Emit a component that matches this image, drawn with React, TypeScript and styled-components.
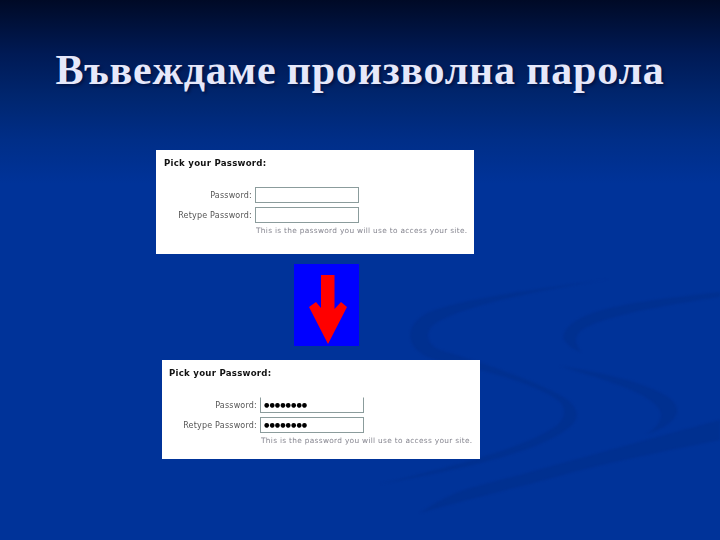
import React from "react";
import styled, { createGlobalStyle } from "styled-components";

const Global = createGlobalStyle`
  html, body { margin: 0; padding: 0; background: #003399; }
`;

const Slide = styled.main`
  position: relative;
  width: 720px;
  height: 540px;
  overflow: hidden;
  background: linear-gradient(180deg, #000a26 0%, #001a55 10%, #00266f 18%, #002e88 26%, #003399 34%, #003399 100%);
  display: flex;
  flex-direction: column;
`;

const Swooshes = styled.svg`
  position: absolute;
  inset: 0;
  width: 720px;
  height: 540px;
  filter: blur(1.2px);
`;

const Title = styled.h1`
  position: relative;
  margin: 0;
  height: 150px;
  box-sizing: border-box;
  padding-top: 45px;
  text-align: center;
  font-family: "Liberation Serif", "Times New Roman", serif;
  font-size: 42px;
  line-height: 50px;
  font-weight: 700;
  letter-spacing: 0.8px;
  word-spacing: -1px;
  color: #e6e8fa;
  text-shadow: 2px 2px 3px rgba(0, 0, 30, 0.45);
  white-space: nowrap;
`;

const Card = styled.section<{ $left: number; $height: number; $top: number; $inset: number }>`
  position: relative;
  width: 318px;
  height: ${(p) => p.$height}px;
  margin-left: ${(p) => p.$left}px;
  margin-top: ${(p) => p.$top}px;
  box-sizing: border-box;
  padding: 7px 8px 0 ${(p) => p.$inset}px;
  background: #fff;
  font-family: "DejaVu Sans", Verdana, sans-serif;
  filter: blur(0.3px);
`;

const CardTitle = styled.h2`
  margin: 0 0 17px;
  font-size: 8.6px;
  line-height: 13px;
  font-weight: 700;
  letter-spacing: 0.25px;
  color: #111;
`;

const Form = styled.div`
  display: grid;
  grid-template-columns: 88px 104px;
  column-gap: 3px;
  row-gap: 4px;
  align-items: center;
`;

const Label = styled.label`
  text-align: right;
  font-size: 8px;
  letter-spacing: 0.2px;
  color: #555;
  white-space: nowrap;
`;

const Field = styled.div<{ $openTop?: boolean }>`
  box-sizing: border-box;
  height: 16px;
  padding: 0 0 0 3px;
  border: 1px solid #8b9c9c;
  border-top-color: ${(p) => (p.$openTop ? "#fff" : "#8b9c9c")};
  display: flex;
  align-items: center;
`;

const Dots = styled.span`
  font-family: "DejaVu Sans", sans-serif;
  font-size: 6.2px;
  line-height: 1;
  letter-spacing: 0px;
  color: #000;
`;

const Hint = styled.p`
  margin: 3px 0 0 92px;
  font-size: 7.4px;
  line-height: 10px;
  letter-spacing: 0.3px;
  font-weight: 400;
  color: #85858f;
  white-space: nowrap;
`;

const ArrowBox = styled.div`
  position: relative;
  width: 65px;
  height: 82px;
  margin: 10px 0 0 294px;
  background: #0000ff;
`;

const ArrowIcon = styled.svg`
  display: block;
  width: 65px;
  height: 82px;
`;

const PasswordCard = ({
  left,
  top,
  height,
  inset,
  filled,
}: {
  left: number;
  top: number;
  height: number;
  inset: number;
  filled?: boolean;
}) => (
  <Card $left={left} $top={top} $height={height} $inset={inset}>
    <CardTitle>Pick your Password:</CardTitle>
    <Form>
      <Label>Password:</Label>
      <Field $openTop={filled}>{filled && <Dots>●●●●●●●●</Dots>}</Field>
      <Label>Retype Password:</Label>
      <Field>{filled && <Dots>●●●●●●●●</Dots>}</Field>
    </Form>
    <Hint>This is the password you will use to access your site.</Hint>
  </Card>
);

export default function App() {
  return (
    <Slide>
      <Global />
      <Swooshes viewBox="0 0 720 540" aria-hidden="true">
        <g fill="#003090">
          <path d="M610 279 C540 289 470 297 432 311 C414 318 408 330 411 341 C415 352 428 359 445 362 C478 368 540 385 560 402 C566 408 566 418 556 426 C530 445 470 462 380 484 C470 468 545 450 572 425 C580 417 578 407 565 398 C535 380 480 362 440 350 C427 344 425 334 432 326 C455 307 540 290 610 279 Z" />
          <path d="M720 292 C670 298 615 303 585 316 C567 324 560 335 565 341 C569 347 575 350 581 352 C577 346 574 340 578 334 C590 318 660 306 720 297 Z" />
          <path d="M560 366 C600 372 645 382 668 397 C680 405 680 416 668 424 C661 429 653 432 646 434 C654 430 660 424 661 416 C662 404 640 392 610 382 C590 375 572 370 560 366 Z" />
          <path d="M720 420 C640 441 540 470 470 488 C450 494 435 503 420 513 C465 500 520 487 570 473 C620 460 680 448 720 440 Z" />
        </g>
      </Swooshes>
      <Title>Въвеждаме произволна парола</Title>
      <PasswordCard left={156} top={0} height={104} inset={8} />
      <ArrowBox>
        <ArrowIcon viewBox="0 0 65 82" aria-hidden="true">
          <polygon fill="#ff0000" points="27,11 40.5,11 40.5,45 47,38 53,43 34,80 15,43 22,38 27,44" />
        </ArrowIcon>
      </ArrowBox>
      <PasswordCard left={162} top={14} height={99} inset={7} filled />
    </Slide>
  );
}
